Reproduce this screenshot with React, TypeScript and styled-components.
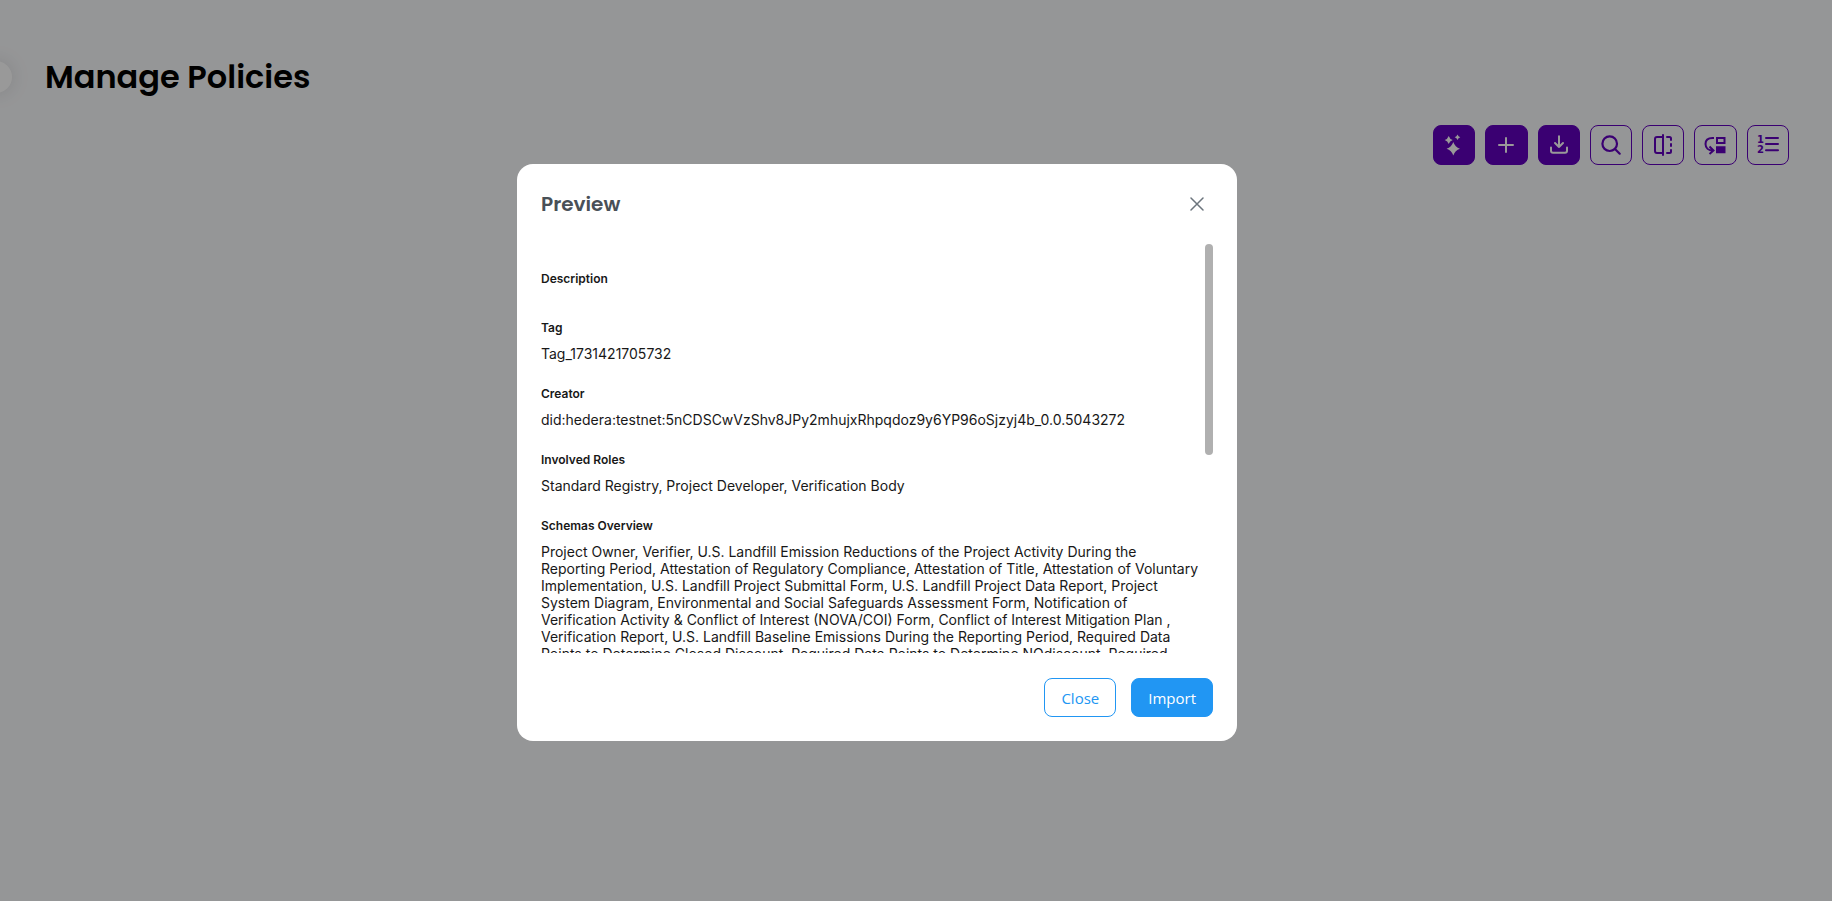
import React from "react";
import styled, { createGlobalStyle } from "styled-components";

const GlobalStyle = createGlobalStyle`
  *, *::before, *::after { box-sizing: border-box; }
  body {
    margin: 0;
    background: #f9fafc;
    color: #181818;
    font-family: Inter, "Liberation Sans", sans-serif;
    overflow: hidden;
  }
  h1, h2, dl, dt, dd { margin: 0; }
  button { font: inherit; cursor: pointer; }
`;

const Page = styled.main`
  position: relative;
  min-height: 100vh;
  padding: 53px 43px 0 45px;
`;

const MenuToggle = styled.button`
  position: absolute;
  top: 61px;
  left: -20px;
  width: 32px;
  height: 32px;
  padding: 0;
  border: 0;
  border-radius: 50%;
  background: #fff;
  box-shadow: 0 0 20px rgba(0, 0, 0, 0.12);
`;

const Title = styled.h1`
  font-family: Poppins, Inter, sans-serif;
  font-size: 32px;
  font-weight: 600;
  line-height: 48px;
  color: #000;
`;

const Toolbar = styled.div`
  display: grid;
  grid-template-columns: repeat(7, 1fr);
  gap: 10px;
  width: 356px;
  margin: 24px 0 0 auto;
`;

const ToolButton = styled.button<{ $filled?: boolean }>`
  display: flex;
  align-items: center;
  justify-content: center;
  height: 40px;
  padding: 0;
  border: 1px solid #6200be;
  border-radius: 8px;
  background: ${({ $filled }) => ($filled ? "#6200be" : "transparent")};
  color: ${({ $filled }) => ($filled ? "#fff" : "#6200be")};
`;

const Overlay = styled.div`
  position: fixed;
  inset: 0;
  display: flex;
  align-items: center;
  justify-content: center;
  padding: 4px 78px 0 0;
  background: rgba(0, 0, 0, 0.4);
`;

const Dialog = styled.section`
  display: flex;
  flex-direction: column;
  width: 720px;
  max-width: 100%;
  padding: 24px;
  border-radius: 16px;
  background: #fff;
`;

const DialogHeader = styled.header`
  display: flex;
  align-items: center;
  justify-content: space-between;
  height: 32px;
  margin-bottom: 24px;
`;

const DialogTitle = styled.h2`
  font-family: Poppins, Inter, sans-serif;
  font-size: 20px;
  font-weight: 600;
  line-height: 32px;
  color: #495057;
`;

const IconButton = styled.button`
  display: flex;
  align-items: center;
  justify-content: center;
  width: 32px;
  height: 32px;
  padding: 0;
  border: 0;
  background: none;
  color: #6c757d;
`;

const Body = styled.div`
  display: flex;
  height: 409px;
`;

const Details = styled.dl`
  flex: 1;
  min-width: 0;
  padding: 27px 4px 0 0;
  overflow-y: auto;
  scrollbar-width: none;
`;

const Field = styled.div`
  display: flex;
  flex-direction: column;
  gap: 10px;
  margin-bottom: 24px;
`;

const Label = styled.dt`
  font-size: 12px;
  font-weight: 600;
  line-height: 15px;
`;

const Value = styled.dd`
  font-size: 14px;
  line-height: 17px;
`;

const ScrollTrack = styled.div`
  flex: none;
  width: 8px;
`;

const ScrollThumb = styled.div`
  height: 211px;
  border-radius: 4px;
  background: #b0b0b0;
`;

const DialogFooter = styled.footer`
  display: flex;
  justify-content: flex-end;
  gap: 15px;
  margin-top: 25px;
`;

const ActionButton = styled.button<{ $primary?: boolean }>`
  height: 39px;
  padding: 0 16px;
  border: 1px solid #2196f3;
  border-radius: 8px;
  background: ${({ $primary }) => ($primary ? "#2196f3" : "#fff")};
  color: ${({ $primary }) => ($primary ? "#fff" : "#2196f3")};
  font-family: "Segoe UI", "Open Sans", sans-serif;
  font-size: 15px;
`;

const SparklesIcon = () => (
  <svg width="24" height="24" viewBox="0 0 24 24" fill="currentColor">
    <path d="M11.300 9 Q13 14 18 15.700 Q13 17.400 11.300 22.400 Q9.600 17.400 4.600 15.700 Q9.600 14 11.300 9Z" />
    <path d="M6.700 3 Q7.700 6 10.700 7 Q7.700 8 6.700 11 Q5.700 8 2.700 7 Q5.700 6 6.700 3Z" />
    <path d="M15.500 1.500 Q16.200 3.600 18.300 4.300 Q16.200 5 15.500 7.100 Q14.800 5 12.700 4.300 Q14.800 3.600 15.500 1.500Z" />
  </svg>
);

const PlusIcon = () => (
  <svg width="24" height="24" viewBox="0 0 24 24" fill="none" stroke="currentColor" strokeWidth="2" strokeLinecap="round">
    <path d="M12 5v14M5 12h14" />
  </svg>
);

const DownloadIcon = () => (
  <svg width="24" height="24" viewBox="0 0 24 24" fill="none" stroke="currentColor" strokeWidth="2" strokeLinecap="round" strokeLinejoin="round">
    <path d="M12 3.300v10.700M8 10l4 4 4-4M4 14.500v3.200a2 2 0 0 0 2 2h12a2 2 0 0 0 2-2v-3.200" />
  </svg>
);

const SearchIcon = () => (
  <svg width="24" height="24" viewBox="0 0 24 24" fill="none" stroke="currentColor" strokeWidth="2.200" strokeLinecap="round">
    <circle cx="10.700" cy="10.700" r="7.300" />
    <path d="M16 16l4.700 4.700" />
  </svg>
);

const CompareIcon = () => (
  <svg width="24" height="24" viewBox="0 0 24 24" fill="none" stroke="currentColor" strokeWidth="2" strokeLinecap="round">
    <path d="M12 2v20M12 4H6a2 2 0 0 0-2 2v12a2 2 0 0 0 2 2h6" />
    <path d="M16 4h2.500A1.500 1.500 0 0 1 20 5.500V7M20 11v2M20 17v1.500a1.500 1.500 0 0 1-1.500 1.500H16" />
  </svg>
);

const MigrateIcon = () => (
  <svg width="24" height="24" viewBox="0 0 24 24" fill="none" stroke="currentColor" strokeWidth="2">
    <path d="M10 5H8.500C4 5 1.500 7.500 1.500 11c0 4 3 6.500 7.500 6.500M5.500 13.500l4 4-4 3.500" />
    <path d="M13 5h7.500v5H13z" />
    <path d="M13 14.300h7.500v5H13z" fill="currentColor" />
  </svg>
);

const IconDigit = styled.text`
  font-family: "DejaVu Sans", sans-serif;
  font-size: 10px;
  font-weight: 700;
`;

const NumberedListIcon = () => (
  <svg width="24" height="24" viewBox="0 0 24 24" fill="currentColor">
    <IconDigit x="1" y="10">1</IconDigit>
    <IconDigit x="1" y="20">2</IconDigit>
    <path d="M10 5h12M10 11h12M10 17.300h12" stroke="currentColor" strokeWidth="2" strokeLinecap="round" />
  </svg>
);

const CloseIcon = () => (
  <svg width="14" height="14" viewBox="0 0 14 14" fill="none" stroke="currentColor" strokeWidth="1.500" strokeLinecap="round">
    <path d="M1 1l12 12M13 1 1 13" />
  </svg>
);

const tools = [
  { label: "Suggest policies", Icon: SparklesIcon, filled: true },
  { label: "Create policy", Icon: PlusIcon, filled: true },
  { label: "Import policy", Icon: DownloadIcon, filled: true },
  { label: "Search policies", Icon: SearchIcon },
  { label: "Compare policies", Icon: CompareIcon },
  { label: "Migrate data", Icon: MigrateIcon },
  { label: "List policies", Icon: NumberedListIcon },
];

const fields = [
  { label: "Description", value: "" },
  { label: "Tag", value: "Tag_1731421705732" },
  { label: "Creator", value: "did:hedera:testnet:5nCDSCwVzShv8JPy2mhujxRhpqdoz9y6YP96oSjzyj4b_0.0.5043272" },
  { label: "Involved Roles", value: "Standard Registry, Project Developer, Verification Body" },
  {
    label: "Schemas Overview",
    value:
      "Project Owner, Verifier, U.S. Landfill Emission Reductions of the Project Activity During the Reporting Period, Attestation of Regulatory Compliance, Attestation of Title, Attestation of Voluntary Implementation, U.S. Landfill Project Submittal Form, U.S. Landfill Project Data Report, Project System Diagram, Environmental and Social Safeguards Assessment Form, Notification of Verification Activity & Conflict of Interest (NOVA/COI) Form, Conflict of Interest Mitigation Plan , Verification Report, U.S. Landfill Baseline Emissions During the Reporting Period, Required Data Points to Determine Closed Discount, Required Data Points to Determine NQdiscount, Required",
  },
];

export default function App() {
  return (
    <>
      <GlobalStyle />
      <Page>
        <MenuToggle aria-label="Toggle menu" />
        <Title>Manage Policies</Title>
        <Toolbar>
          {tools.map(({ label, Icon, filled }) => (
            <ToolButton key={label} aria-label={label} $filled={filled}>
              <Icon />
            </ToolButton>
          ))}
        </Toolbar>
      </Page>
      <Overlay>
        <Dialog role="dialog" aria-modal="true" aria-labelledby="preview-title">
          <DialogHeader>
            <DialogTitle id="preview-title">Preview</DialogTitle>
            <IconButton aria-label="Close preview">
              <CloseIcon />
            </IconButton>
          </DialogHeader>
          <Body>
            <Details>
              {fields.map(({ label, value }) => (
                <Field key={label}>
                  <Label>{label}</Label>
                  <Value>{value}</Value>
                </Field>
              ))}
            </Details>
            <ScrollTrack>
              <ScrollThumb />
            </ScrollTrack>
          </Body>
          <DialogFooter>
            <ActionButton>Close</ActionButton>
            <ActionButton $primary>Import</ActionButton>
          </DialogFooter>
        </Dialog>
      </Overlay>
    </>
  );
}
